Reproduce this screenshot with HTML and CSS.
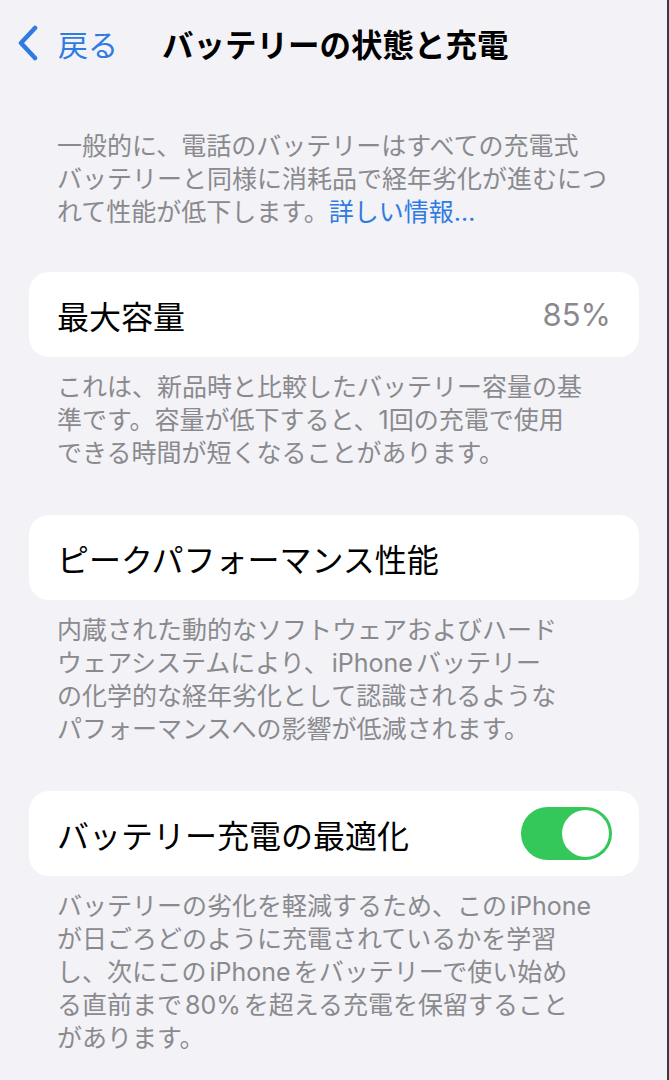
FILE: index.html
```html
<!DOCTYPE html>
<html lang="ja">
<head>
  <meta charset="UTF-8" />
  <title>バッテリーの状態と充電</title>
  <link rel="stylesheet" href="styles.css">
</head>
<body>

  <div class="nav">
    <a class="back" href="#">
      <svg class="chevron" width="22" height="36" viewBox="0 0 22 36">
        <path d="M18 3 L4 18 L18 33" fill="none" stroke="currentColor" stroke-width="4.5" stroke-linecap="round" stroke-linejoin="round"/>
      </svg>
      <span>戻る</span>
    </a>
    <h1 class="title">バッテリーの状態と充電</h1>
  </div>

  <p class="intro">
    一般的に、電話のバッテリーはすべての充電式<br>
    バッテリーと同様に消耗品で経年劣化が進むにつ<br>
    れて性能が低下します。<a href="#" class="more">詳しい情報…</a>
  </p>

  <div class="section">
    <div class="card">
      <span class="label">最大容量</span>
      <span class="value">85%</span>
    </div>
    <p class="footer">
      これは、新品時と比較したバッテリー容量の基<br>
      準です。容量が低下すると、1回の充電で使用<br>
      できる時間が短くなることがあります。
    </p>
  </div>

  <div class="section">
    <div class="card">
      <span class="label">ピークパフォーマンス性能</span>
    </div>
    <p class="footer">
      内蔵された動的なソフトウェアおよびハード<br>
      ウェアシステムにより、<span class="latin">iPhone</span>バッテリー<br>
      の化学的な経年劣化として認識されるような<br>
      パフォーマンスへの影響が低減されます。
    </p>
  </div>

  <div class="section">
    <div class="card">
      <span class="label">バッテリー充電の最適化</span>
      <span class="toggle on"><span class="knob"></span></span>
    </div>
    <p class="footer">
      バッテリーの劣化を軽減するため、この<span class="latin">iPhone</span><br>
      が日ごろどのように充電されているかを学習<br>
      し、次にこの<span class="latin">iPhone</span>をバッテリーで使い始め<br>
      る直前まで<span class="latin">80%</span>を超える充電を保留すること<br>
      があります。
    </p>
  </div>

</body>
</html>
```

FILE: styles.css
```css
body {
  margin: 0;
  min-height: 1080px;
  box-sizing: border-box;
  padding: 0 28px 0 29px;
  border-right: 2px solid #3c3c40;
  background: #f2f2f7;
  font-family: Inter, "Noto Sans CJK JP", sans-serif;
  color: #000;
}

.nav {
  display: flex;
  align-items: center;
  height: 86px;
  margin-left: -12px;
}

.back {
  display: flex;
  align-items: center;
  gap: 19px;
  color: #2f7be2;
  text-decoration: none;
  font-size: 30px;
  font-family: "Noto Sans CJK JP", sans-serif;
}

.chevron { display: block; }

.title {
  margin: 0 0 0 44px;
  font-size: 31.5px;
  font-weight: 700;
  font-family: "Noto Sans CJK JP", sans-serif;
}

.intro {
  margin: 44px 0 0;
  padding: 0 28px;
  font-size: 25px;
  line-height: 33px;
  color: #8a8a8e;
  white-space: nowrap;
}

.more {
  color: #2f7be2;
  text-decoration: none;
}

.section { margin-top: 43px; }
.section + .section { margin-top: 45px; }

.card {
  display: flex;
  align-items: center;
  justify-content: space-between;
  height: 85px;
  padding: 0 28px;
  background: #fff;
  border-radius: 20px;
}

.label {
  font-size: 32px;
  font-family: "Noto Sans CJK JP", sans-serif;
}

.value {
  font-size: 31px;
  color: #8a8a8e;
}

.footer {
  margin: 14px 0 0;
  padding: 0 28px;
  font-size: 25px;
  line-height: 33px;
  color: #8a8a8e;
  white-space: nowrap;
}

.latin { margin: 0 3px; }

.toggle {
  position: relative;
  width: 91px;
  height: 53px;
  border-radius: 27px;
  background: #e9e9eb;
  margin-right: -1px;
}

.toggle.on { background: #34c759; }

.knob {
  position: absolute;
  top: 3px;
  right: 3px;
  width: 47px;
  height: 47px;
  border-radius: 50%;
  background: #fff;
}
```
